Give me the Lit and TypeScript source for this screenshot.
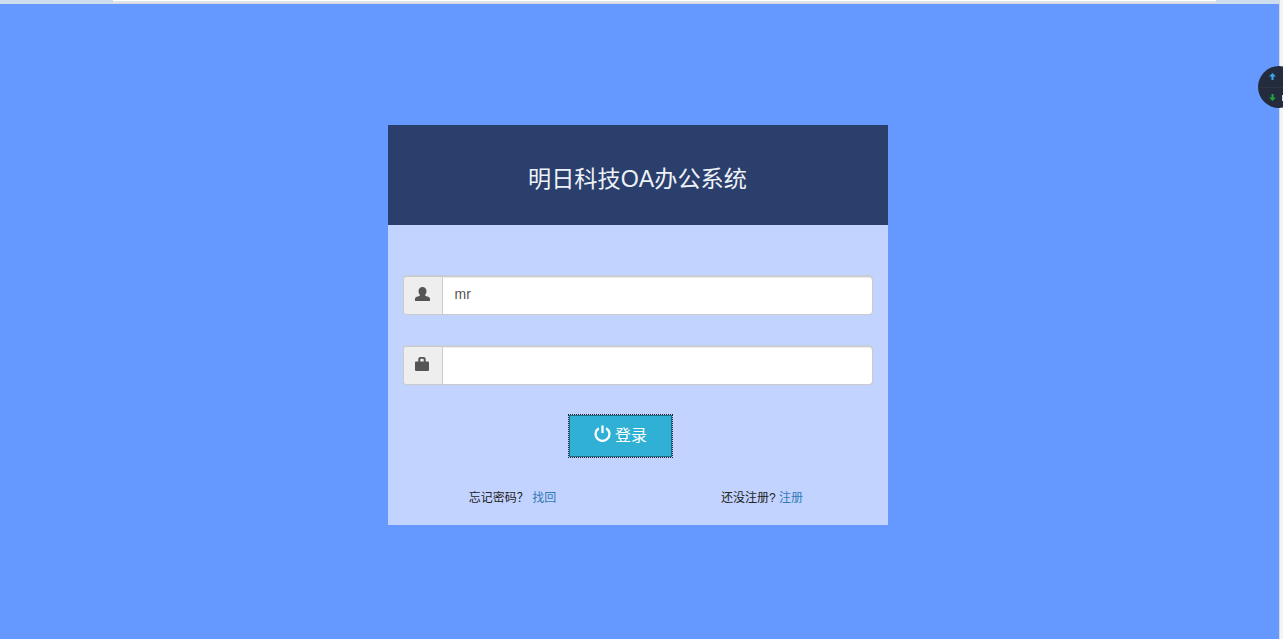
import { LitElement, html, css } from "lit";
import { customElement } from "lit/decorators.js";

@customElement("app-root")
export class AppRoot extends LitElement {
  static styles = css`
    :host { display: block; height: 639px; overflow: hidden; position: relative; background: #6699ff; font-family: "Liberation Sans", "Noto Sans CJK SC", sans-serif; }
    .top { display: flex; height: 4px; background: #cfdeef; }
    .tab { margin-left: 113px; width: 1103px; height: 4px; box-sizing: border-box; background: #e0e3e8; border-top: 1px solid #fff; border-bottom: 1px solid #d5dbe4; }
    .edge { position: absolute; top: 0; right: 0; width: 4px; height: 639px; background: #f4f5f7; border-left: 1px solid #d8dbe0; box-sizing: border-box; }
    .page { display: flex; justify-content: center; padding: 121px 8px 0 0; }
    .card { width: 500px; height: 400px; background: #c2d3ff; display: flex; flex-direction: column; }
    .head { height: 100px; background: #2a3f6b; color: #eef2f8; font-size: 23.2px; display: flex; align-items: center; justify-content: center; padding-top: 5px; padding-bottom: 1px; box-sizing: border-box; }
    .form { padding: 51px 15px 0; display: flex; flex-direction: column; gap: 31px; }
    .group { display: flex; height: 39px; box-sizing: border-box; border: 1px solid #cbcbcb; border-radius: 4px; overflow: hidden; background: #fff; box-shadow: 0 -1px 0 rgba(200,200,200,.55), 0 0 1px #c8c8c8, inset 0 1px 1px rgba(0,0,0,.075); }
    .addon { width: 39px; flex: none; background: #eee; border-right: 1px solid #ccc; display: flex; align-items: center; justify-content: center; color: #555; padding-bottom: 4px; box-sizing: border-box; }
    .addon svg { display: block; }
    .addon svg.lock { margin-right: 1px; }
    .input { flex: 1; padding-left: 12px; font-size: 14px; color: #555; display: flex; align-items: center; padding-bottom: 4px; }
    .btn-row { display: flex; padding: 30px 0 0 181px; }
    .btn { width: 103px; height: 42px; box-sizing: border-box; background: #31b0d5; border: 1px solid #1b6d85; outline: 1px dotted #222; color: #fff; font-size: 16px; display: flex; align-items: center; justify-content: center; gap: 4px; font-family: inherit; padding: 0 0 5px 1px; }
    .btn svg { display: block; }
    .links { display: flex; padding-top: 33px; font-size: 12px; color: #222; line-height: 17px; }
    .links > div { width: 250px; text-align: center; flex: none; box-sizing: border-box; }
    .links > div + div { padding-right: 1px; }
    a { color: #337ab7; text-decoration: none; }
    .float { position: absolute; left: 1258px; top: 66px; width: 42px; height: 42px; border-radius: 50%; background: #232b3d; overflow: hidden; }
    .float .line { position: absolute; left: 0; right: 0; top: 21px; height: 1px; background: #2b3346; }
    .float svg { position: absolute; left: 11px; }
    .float svg.up { top: 7px; }
    .float svg.down { top: 28px; }
    .chip { position: absolute; left: 1282px; top: 95px; width: 1px; height: 6px; background: #cfe0ee; }
  `;

  render() {
    return html`
      <div class="top"><div class="tab"></div></div>
      <div class="edge"></div>
      <div class="page">
        <div class="card">
          <div class="head">明日科技OA办公系统</div>
          <div class="form">
            <div class="group">
              <div class="addon">
                <svg width="15" height="14" viewBox="0 0 15 14"><path fill="#555" d="M7.5 0c2.4 0 4 1.700 4 4.200 0 1.400-.5 2.500-1.200 3.300-.3.4-.3.9.1 1.200.4.3 1.200.6 2.200.9 1.500.5 2.400 1.200 2.400 2.400V14H0v-2c0-1.200.9-1.900 2.400-2.400 1-.3 1.800-.6 2.200-.9.4-.3.4-.8.1-1.200C4 6.700 3.500 5.600 3.500 4.200 3.500 1.700 5.100 0 7.500 0z"/></svg>
              </div>
              <div class="input">mr</div>
            </div>
            <div class="group">
              <div class="addon">
                <svg class="lock" width="14" height="14" viewBox="0 0 14 14"><path fill="#555" fill-rule="evenodd" d="M3.300 4.500V2.200C3.300 .8 4.200 0 5.500 0h3c1.300 0 2.200.8 2.200 2.200v2.300H13a1 1 0 0 1 1 1V13a1 1 0 0 1-1 1H1a1 1 0 0 1-1-1V5.500a1 1 0 0 1 1-1zm2 0h3.400V2.600c0-.5-.3-.8-.8-.8H6.100c-.5 0-.8.3-.8.8z"/></svg>
              </div>
              <div class="input"></div>
            </div>
          </div>
          <div class="btn-row">
            <div class="btn">
              <svg width="17" height="17" viewBox="0 0 17 17" fill="none" stroke="#fff" stroke-width="2.300"><path d="M4.800 3.200a6.900 6.900 0 1 0 7.400 0"/><path d="M8.500 0.500v7.500"/></svg>
              <span>登录</span>
            </div>
          </div>
          <div class="links">
            <div>忘记密码？ <a>找回</a></div>
            <div>还没注册? <a>注册</a></div>
          </div>
        </div>
      </div>
      <div class="float">
        <div class="line"></div>
        <svg class="up" width="7" height="7" viewBox="0 0 8 8"><path fill="#3ba7e8" d="M4 0l4 4H5.200v4H2.800V4H0z"/></svg>
        <svg class="down" width="7" height="7" viewBox="0 0 8 8"><path fill="#21a33e" d="M4 8L0 4h2.800V0h2.400v4H8z"/></svg>
      </div>
      <div class="chip"></div>
    `;
  }
}
